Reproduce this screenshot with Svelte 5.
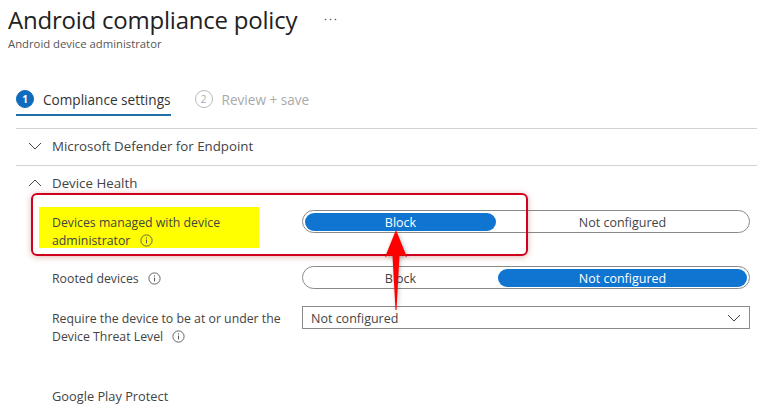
<script>
    const toggles = [
        { label: "Devices managed with device administrator", on: 0, marked: true },
        { label: "Rooted devices", on: 1, marked: false }
    ];
    const options = ["Block", "Not configured"];
</script>

{#snippet info()}
    <svg class="info" width="13" height="13" viewBox="0 0 13 13">
        <circle cx="6.5" cy="6.5" r="5.6" fill="none" stroke="#555" stroke-width="0.9" />
        <path d="M6.5 5.6v3.8" stroke="#555" stroke-width="1" />
        <circle cx="6.5" cy="3.9" r="0.65" fill="#555" />
    </svg>
{/snippet}

<div class="page">
    <header>
        <div class="title-row">
            <h1>Android compliance policy</h1>
            <svg class="more" width="13" height="3" viewBox="0 0 13 3">
                <circle cx="1.5" cy="1.5" r="0.8" fill="#555" />
                <circle cx="6.5" cy="1.5" r="0.8" fill="#555" />
                <circle cx="11.5" cy="1.5" r="0.8" fill="#555" />
            </svg>
        </div>
        <p class="sub">Android device administrator</p>
    </header>

    <nav class="tabs">
        <div class="tab active">
            <span class="num">1</span>
            <span class="tab-text">Compliance settings</span>
        </div>
        <div class="tab">
            <span class="num">2</span>
            <span class="tab-text">Review + save</span>
        </div>
    </nav>

    <div class="section closed">
        <svg width="14" height="8" viewBox="0 0 14 8"><path d="M1 1l6 6 6-6" fill="none" stroke="#444" /></svg>
        <span>Microsoft Defender for Endpoint</span>
    </div>
    <div class="section">
        <svg width="14" height="8" viewBox="0 0 14 8"><path d="M1 7l6-6 6 6" fill="none" stroke="#444" /></svg>
        <span>Device Health</span>
    </div>

    <div class="rows">
        {#each toggles as t}
            <div class="row">
                <div class="label" class:marked={t.marked}>
                    <span>{t.label}</span>
                    {@render info()}
                </div>
                <div class="toggle">
                    {#each options as o, i}
                        <div class="opt" class:on={t.on === i}>{o}</div>
                    {/each}
                </div>
            </div>
        {/each}
        <div class="row">
            <div class="label">
                <span>Require the device to be at or under the Device Threat Level</span>
                {@render info()}
            </div>
            <div class="select">
                <span>Not configured</span>
                <svg width="14" height="8" viewBox="0 0 14 8"><path d="M1 1l6 6 6-6" fill="none" stroke="#444" /></svg>
            </div>
        </div>
        <div class="play">Google Play Protect</div>
    </div>

    <div class="callout"></div>
    <svg class="arrow" width="26" height="82" viewBox="0 0 26 82">
        <path d="M13 0L24 27Q19 24 16.5 26L13.5 80H12.5L9.5 26Q7 24 2 27Z" fill="#f00" />
    </svg>
</div>

<style>
    :global(body) {
        margin: 0;
        background: #fff;
    }
    .page {
        position: relative;
        width: 773px;
        height: 409px;
        overflow: hidden;
        font-family: "Open Sans", "Noto Sans", sans-serif;
        color: #333;
        font-size: 12.5px;
    }
    header {
        padding: 2px 0 0 8px;
    }
    .title-row {
        display: flex;
        align-items: center;
        gap: 27px;
        height: 35px;
    }
    h1 {
        margin: 0;
        font-size: 24px;
        font-weight: 400;
        letter-spacing: -0.22px;
        color: #222;
        white-space: nowrap;
    }
    .more {
        position: relative;
        top: 0;
    }
    .sub {
        margin: 0;
        font-size: 11.3px;
        line-height: 14px;
        color: #555;
    }
    .tabs {
        display: flex;
        gap: 24px;
        margin: 37px 16px 0;
        border-bottom: 1px solid #d2d2d2;
        height: 40px;
        align-items: flex-start;
    }
    .tab {
        box-sizing: border-box;
        display: flex;
        align-items: center;
        gap: 9px;
        height: 28px;
        padding-bottom: 6px;
        color: #aaa;
        font-size: 13.6px;
    }
    .tab.active {
        color: #333;
        padding-bottom: 4px;
        border-bottom: 2px solid #1f6fa8;
    }
    .num {
        box-sizing: border-box;
        width: 18px;
        height: 18px;
        border-radius: 50%;
        border: 1px solid #bbb;
        display: flex;
        align-items: center;
        justify-content: center;
        font-size: 10px;
    }
    .tab.active .num {
        background: #0f6cbd;
        border-color: #0f6cbd;
        color: #fff;
        font-weight: 700;
    }
    .section {
        display: flex;
        align-items: center;
        gap: 10px;
        height: 34px;
        padding: 0 0 2px 12px;
        margin: 0 16px;
        font-size: 13.3px;
        color: #444;
    }
    .section.closed {
        border-bottom: 1px solid #d2d2d2;
    }
    .rows {
        margin-top: 8px;
        padding: 0 23px 0 52px;
    }
    .row {
        display: grid;
        grid-template-columns: 250px 1fr;
        align-items: start;
        margin-bottom: 17px;
        color: #444;
    }
    .label {
        box-sizing: border-box;
        padding-top: 4px;
        line-height: 18px;
        width: 232px;
        font-size: 12.3px;
    }
    .label.marked {
        position: relative;
        z-index: 0;
        width: 190px;
        height: 39px;
    }
    .label.marked::before {
        content: "";
        position: absolute;
        z-index: -1;
        left: -13px;
        top: -3px;
        width: 220px;
        height: 41px;
        background: #ffff00;
    }
    .info {
        margin-left: 6px;
        vertical-align: -2px;
    }
    .toggle {
        box-sizing: border-box;
        height: 23px;
        border: 1px solid #8a8a8a;
        border-radius: 12px;
        padding: 2px;
        display: grid;
        grid-template-columns: 191px 1fr;
        gap: 2px;
    }
    .opt {
        border-radius: 9px;
        display: flex;
        align-items: center;
        justify-content: center;
        padding-top: 1px;
        color: #444;
        font-size: 12.5px;
    }
    .opt.on {
        background: #0f75d1;
        color: #fff;
    }
    .select {
        box-sizing: border-box;
        height: 23px;
        border: 1px solid #8a8a8a;
        display: flex;
        align-items: center;
        justify-content: space-between;
        padding: 1px 8px 0;
        font-size: 12.5px;
    }
    .play {
        margin-top: 41px;
        line-height: 18px;
        font-size: 12.8px;
        color: #444;
    }
    .callout {
        position: absolute;
        left: 31px;
        top: 193px;
        width: 493px;
        height: 59px;
        border: 2px solid #d0021b;
        border-radius: 6px;
        box-shadow: 0 1px 6px rgba(180, 40, 40, 0.35);
    }
    .arrow {
        position: absolute;
        left: 383px;
        top: 230px;
        filter: drop-shadow(1px 1px 2px rgba(0, 0, 0, 0.25));
    }
</style>
